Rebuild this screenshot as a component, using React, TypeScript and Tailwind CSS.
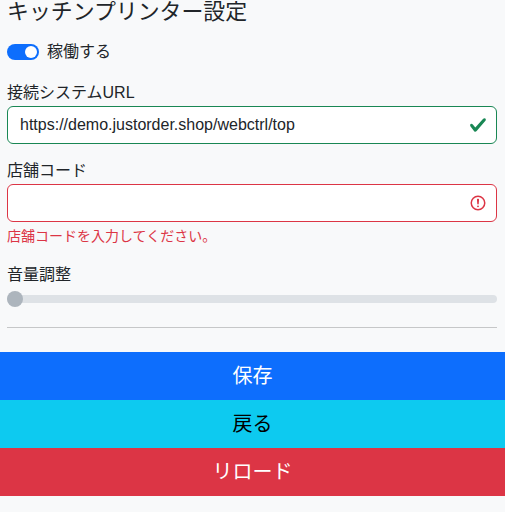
import React from "react";

const FONT = {
  fontFamily: '"Liberation Sans", "Noto Sans CJK JP", sans-serif',
};

export default function App() {
  return (
    <div className="min-h-[512px] w-full bg-[#f8f9fa] text-[#212529]" style={FONT}>
      <div className="pl-[7px] pr-[8px]">
        <div className="h-[24px] text-[21.9px] leading-[24px]">キッチンプリンター設定</div>

        <div className="mt-[16px] flex h-[24px] items-center gap-[8px]">
          <div className="flex h-[16px] w-[32px] items-center justify-end rounded-full bg-[#0d6efd] pr-[2px]">
            <div className="h-[12px] w-[12px] rounded-full bg-white" />
          </div>
          <span className="text-[16px] leading-[24px]">稼働する</span>
        </div>

        <div className="mt-[17px] h-[24px] text-[16px] leading-[24px]">接続システムURL</div>
        <div className="mt-[1px] flex h-[38px] items-center rounded-[6px] border border-[#198754] bg-white pl-[12px] pr-[9px]">
          <span className="flex-1 text-[16px] leading-[24px]">https://demo.justorder.shop/webctrl/top</span>
          <svg width="18" height="18" viewBox="0 0 8 8">
            <path
              fill="#198754"
              d="M2.3 6.73.6 4.53c-.4-1.04.46-1.4 1.1-.8l1.1 1.4 3.4-3.8c.6-.63 1.6-.27 1.2.7l-4 4.6c-.43.5-.8.4-1.1.1z"
            />
          </svg>
        </div>

        <div className="mt-[15px] h-[24px] text-[16px] leading-[24px]">店舗コード</div>
        <div className="mt-[1px] flex h-[38px] items-center justify-end rounded-[6px] border border-[#dc3545] bg-white pr-[9px]">
          <svg width="18" height="18" viewBox="0 0 12 12" fill="none" stroke="#dc3545">
            <circle cx="6" cy="6" r="4.5" />
            <path strokeLinejoin="round" d="M5.8 3.6h.4L6 6.5z" />
            <circle cx="6" cy="8.2" r=".6" fill="#dc3545" stroke="none" />
          </svg>
        </div>
        <div className="mt-[4px] h-[21px] text-[14px] leading-[21px] text-[#dc3545]">
          店舗コードを入力してください。
        </div>

        <div className="mt-[16px] h-[24px] text-[16px] leading-[24px]">音量調整</div>
        <div className="relative mt-[4px] flex h-[16px] items-center">
          <div className="h-[8px] w-full rounded-full bg-[#dee2e6]" />
          <div className="absolute left-0 top-0 h-[16px] w-[16px] rounded-full bg-[#adb5bd]" />
        </div>

        <div className="mt-[20px] h-[1px] bg-[#c6c7c8]" />
      </div>

      <div className="mt-[24px] flex flex-col">
        <button className="h-[48px] w-full bg-[#0d6efd] text-[20px] text-white">保存</button>
        <button className="h-[48px] w-full bg-[#0dcaf0] text-[20px] text-black">戻る</button>
        <button className="h-[48px] w-full bg-[#dc3545] text-[20px] text-white">リロード</button>
      </div>
    </div>
  );
}
